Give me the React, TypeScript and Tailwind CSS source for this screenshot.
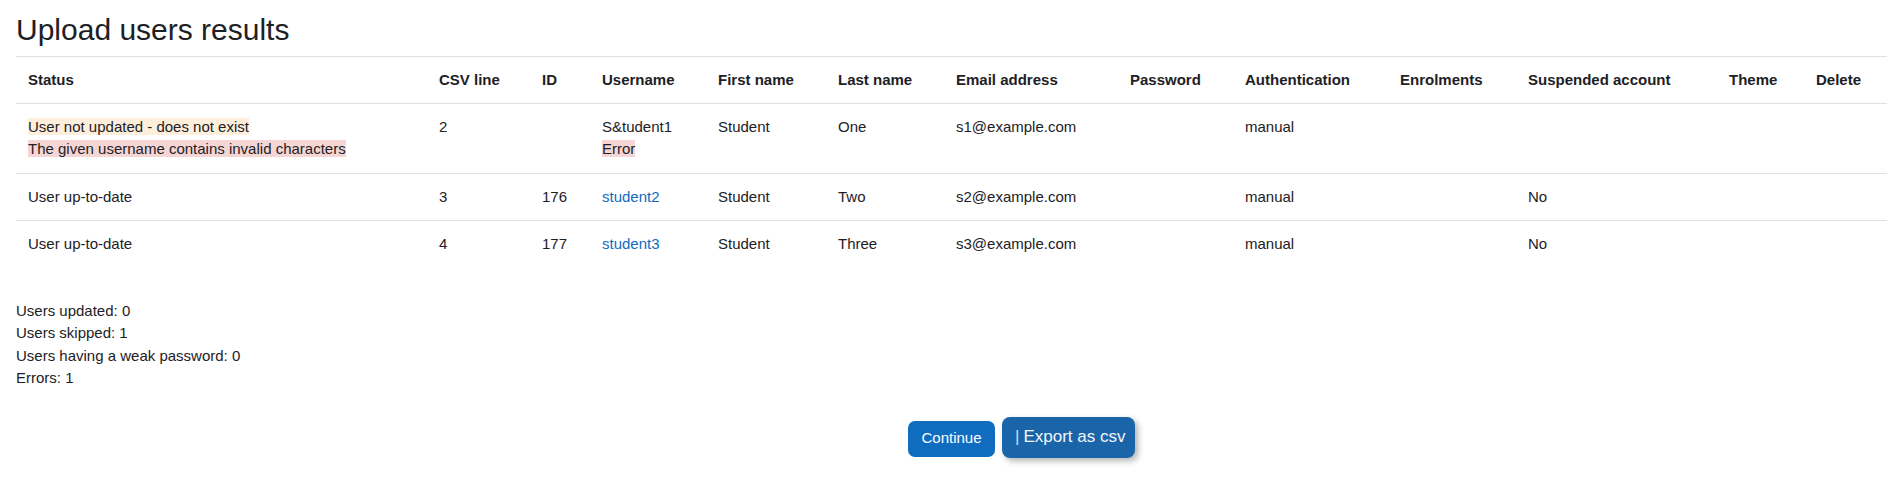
import React from "react";

const cols = [411, 103, 60, 116, 120, 118, 174, 115, 155, 128, 201, 87, 83];
const headers = [
  "Status",
  "CSV line",
  "ID",
  "Username",
  "First name",
  "Last name",
  "Email address",
  "Password",
  "Authentication",
  "Enrolments",
  "Suspended account",
  "Theme",
  "Delete",
];

const td = "border-t border-[#dee2e6] px-3 py-3 align-top";
const th = "border-t border-[#dee2e6] px-3 pt-3 pb-[11px] align-top font-bold whitespace-nowrap";

export default function App() {
  return (
    <div
      className="min-h-[494px] bg-white pl-4 text-[15px] leading-[22.5px] text-[#1d2125]"
      style={{ fontFamily: '"Liberation Sans", Arial, sans-serif' }}
    >
      <h2 className="pt-3 mb-[8px] text-[30px] leading-9 font-normal">Upload users results</h2>
      <table className="w-[1871px] table-fixed border-collapse text-left">
        <colgroup>
          {cols.map((w, i) => (
            <col key={i} style={{ width: w }} />
          ))}
        </colgroup>
        <thead>
          <tr>
            {headers.map((h) => (
              <th key={h} className={th}>
                {h}
              </th>
            ))}
          </tr>
        </thead>
        <tbody>
          <tr>
            <td className={td}>
              <div>
                <span className="bg-[#fdefdc]">User not updated - does not exist</span>
              </div>
              <div>
                <span className="bg-[#f5d6d4]">The given username contains invalid characters</span>
              </div>
            </td>
            <td className={td}>2</td>
            <td className={td}></td>
            <td className={td}>
              <div>S&amp;tudent1</div>
              <div>
                <span className="bg-[#f5d6d4]">Error</span>
              </div>
            </td>
            <td className={td}>Student</td>
            <td className={td}>One</td>
            <td className={td}>s1@example.com</td>
            <td className={td}></td>
            <td className={td}>manual</td>
            <td className={td}></td>
            <td className={td}></td>
            <td className={td}></td>
            <td className={td}></td>
          </tr>
          <tr>
            <td className={td}>User up-to-date</td>
            <td className={td}>3</td>
            <td className={td}>176</td>
            <td className={td}>
              <a className="text-[#0f6cbf]" href="#">student2</a>
            </td>
            <td className={td}>Student</td>
            <td className={td}>Two</td>
            <td className={td}>s2@example.com</td>
            <td className={td}></td>
            <td className={td}>manual</td>
            <td className={td}></td>
            <td className={td}>No</td>
            <td className={td}></td>
            <td className={td}></td>
          </tr>
          <tr>
            <td className={td}>User up-to-date</td>
            <td className={td}>4</td>
            <td className={td}>177</td>
            <td className={td}>
              <a className="text-[#0f6cbf]" href="#">student3</a>
            </td>
            <td className={td}>Student</td>
            <td className={td}>Three</td>
            <td className={td}>s3@example.com</td>
            <td className={td}></td>
            <td className={td}>manual</td>
            <td className={td}></td>
            <td className={td}>No</td>
            <td className={td}></td>
            <td className={td}></td>
          </tr>
        </tbody>
      </table>
      <div className="mt-[32px]">
        <div>Users updated: 0</div>
        <div>Users skipped: 1</div>
        <div>Users having a weak password: 0</div>
        <div>Errors: 1</div>
      </div>
      <div className="mt-[27px] grid w-[1865px] grid-cols-[1fr_auto_1fr] items-start">
        <div />
        <button className="mt-[4px] ml-[6px] flex h-[36px] w-[87px] items-center justify-center rounded-[7px] bg-[#0f6cbf] text-[15px] text-white">
          Continue
        </button>
        <div className="pl-[7px]">
          <button className="flex h-[41px] w-[133px] items-center rounded-[8px] bg-[#1a65a9] pl-[13px] text-[17px] text-[#f2f6fa] shadow-[3px_3px_6px_rgba(0,0,0,0.3)]">
            <span className="mr-[4px] font-light text-[#cfdff0]">|</span>
            <span>Export as csv</span>
          </button>
        </div>
      </div>
    </div>
  );
}
